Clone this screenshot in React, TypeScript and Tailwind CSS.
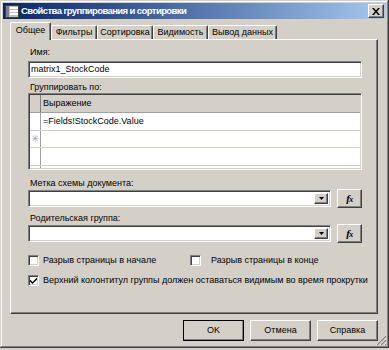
import React from "react";

const raised =
  "border border-t-white border-l-white border-r-[#404040] border-b-[#404040] shadow-[inset_-1px_-1px_0_#808080]";
const sunken =
  "border border-t-[#808080] border-l-[#808080] border-r-white border-b-white shadow-[inset_1px_1px_0_#404040,inset_-1px_-1px_0_#d4d0c8]";

function TitleIcon() {
  return (
    <svg width="14" height="13" viewBox="0 0 14 13" className="shrink-0">
      <rect x="0.5" y="0.5" width="13" height="12" fill="#c0c0c0" stroke="#404040" />
      <rect x="1" y="1" width="3" height="11" fill="#808080" />
      <rect x="5" y="2" width="8" height="2" fill="#ffffff" />
      <rect x="5" y="5" width="8" height="2" fill="#ffffff" />
      <rect x="5" y="8" width="8" height="2" fill="#ffffff" />
    </svg>
  );
}

function CloseBtn() {
  return (
    <div className={`w-[16px] h-[14px] bg-[#d4d0c8] flex items-center justify-center ${raised}`}>
      <svg width="8" height="7" viewBox="0 0 8 7">
        <path d="M0 0h2l2 2.5L6 0h2L5 3.5 8 7H6L4 4.5 2 7H0l3-3.5z" fill="#000" />
      </svg>
    </div>
  );
}

function Combo() {
  return (
    <div className={`flex-1 h-[17px] bg-white flex items-stretch justify-end p-[2px] ${sunken}`}>
      <div className={`w-[14px] bg-[#d4d0c8] flex items-center justify-center ${raised}`}>
        <svg width="5" height="3" viewBox="0 0 5 3">
          <path d="M0 0h5L2.5 3z" fill="#000" />
        </svg>
      </div>
    </div>
  );
}

function FxBtn() {
  return (
    <div className={`w-[25px] h-[19px] ml-[6px] bg-[#d4d0c8] flex items-center justify-center ${raised}`}>
      <span className="font-['Liberation_Serif',serif] italic font-bold text-[11px] leading-none tracking-[-0.5px]">
        f<span className="text-[8px]">x</span>
      </span>
    </div>
  );
}

function Check({ checked }: { checked?: boolean }) {
  return (
    <div className={`w-[11px] h-[11px] bg-white shrink-0 flex items-center justify-center ${sunken}`}>
      {checked && (
        <svg width="7" height="7" viewBox="0 0 7 7">
          <path d="M0 2.5l2.5 2.5L7 0.5v2L2.5 7 0 4.5z" fill="#000" />
        </svg>
      )}
    </div>
  );
}

function Btn({ label, def }: { label: string; def?: boolean }) {
  return (
    <div
      className={`w-[61px] h-[21px] flex items-center justify-center bg-[#d4d0c8] ${
        def ? "outline outline-1 outline-black -outline-offset-1" : ""
      } ${raised}`}
    >
      {label}
    </div>
  );
}

export default function App() {
  return (
    <div className="w-[389px] h-[350px] bg-[#d4d0c8] font-['Liberation_Sans',Arial,sans-serif] text-[9px] text-black overflow-hidden">
      <div className="relative w-[389px] h-[348px] p-[3px] flex flex-col shadow-[inset_-1px_-1px_0_#404040,inset_1px_1px_0_#d4d0c8,inset_-2px_-2px_0_#808080,inset_2px_2px_0_#ffffff]">
        {/* Title bar */}
        <div className="h-[16px] flex items-center bg-linear-to-r from-[#0a246a] to-[#a6caf0] pl-[2px] pr-[2px]">
          <TitleIcon />
          <span className="ml-[2px] text-white font-bold text-[9.5px] tracking-[-0.6px] leading-none whitespace-nowrap">
            Свойства группирования и сортировки
          </span>
          <div className="ml-auto">
            <CloseBtn />
          </div>
        </div>

        {/* Tabs */}
        <div className="mt-[3px] ml-[7px] flex items-end h-[17px]">
          <div className="relative z-10 w-[41px] h-[18px] -mb-px bg-[#d4d0c8] border-t border-l border-t-white border-l-white border-r border-r-[#404040] rounded-t-[2px] flex items-center justify-center pb-[1px] shadow-[inset_-1px_0_0_#808080]">
            Общее
          </div>
          {[
            ["Фильтры", "w-[46px]"],
            ["Сортировка", "w-[56px]"],
            ["Видимость", "w-[55px]"],
            ["Вывод данных", "w-[69px]"],
          ].map(([t, w]) => (
            <div
              key={t}
              className={`${w} h-[14px] bg-[#d4d0c8] border-t border-l border-t-white border-l-white border-r border-r-[#404040] rounded-t-[2px] flex items-center justify-center shadow-[inset_-1px_0_0_#808080] whitespace-nowrap`}
            >
              {t}
            </div>
          ))}
        </div>

        {/* Panel */}
        <div className="ml-[7px] mr-[8px] h-[275px] border border-t-white border-l-white border-r-[#404040] border-b-[#404040] shadow-[inset_-1px_-1px_0_#808080] pl-[17px] pr-[15px] pt-[6px] flex flex-col">
          <div className="leading-[12px] pl-[2px]">Имя:</div>
          <div className={`mt-[3px] h-[17px] bg-white flex items-center pl-[2px] ${sunken}`}>matrix1_StockCode</div>

          <div className="mt-[3px] leading-[12px] pl-[2px]">Группировать по:</div>
          <div className={`h-[77px] bg-white p-[1px] flex flex-col overflow-hidden ${sunken}`}>
            <div className="h-[18px] flex bg-[#d4d0c8] border-b border-b-[#a0a0a0] shrink-0">
              <div className="w-[11px] border-r border-r-[#808080]" />
              <div className="flex-1 flex items-center pl-[2px]">Выражение</div>
            </div>
            <div className="h-[18px] flex border-b border-b-[#d4d0c8] shrink-0">
              <div className="w-[11px] border-r border-r-[#a0a0a0]" />
              <div className="flex-1 flex items-center pl-[2px]">=Fields!StockCode.Value</div>
            </div>
            <div className="h-[17px] flex border-b border-b-[#d4d0c8] shrink-0">
              <div className="w-[11px] border-r border-r-[#a0a0a0] flex items-center justify-center text-[#9aa8c0] text-[10px] leading-none">
                ✳
              </div>
              <div className="flex-1" />
            </div>
            <div className="h-[18px] flex border-b border-b-[#d4d0c8] shrink-0">
              <div className="w-[11px] border-r border-r-[#a0a0a0]" />
              <div className="flex-1" />
            </div>
            <div className="flex-1 flex">
              <div className="w-[11px] border-r border-r-[#a0a0a0]" />
            </div>
          </div>

          <div className="mt-[7px] leading-[12px] pl-[2px]">Метка схемы документа:</div>
          <div className="h-[19px] flex items-center">
            <Combo />
            <FxBtn />
          </div>

          <div className="mt-[4px] leading-[12px] pl-[2px]">Родительская группа:</div>
          <div className="h-[19px] flex items-center">
            <Combo />
            <FxBtn />
          </div>

          <div className="mt-[11px] h-[13px] flex items-center">
            <div className="w-[162px] flex items-center">
              <Check />
              <span className="ml-[4px] whitespace-nowrap">Разрыв страницы в начале</span>
            </div>
            <div className="flex items-center">
              <Check />
              <span className="ml-[10px] whitespace-nowrap">Разрыв страницы в конце</span>
            </div>
          </div>
          <div className="mt-[7px] h-[13px] flex items-center">
            <Check checked />
            <span className="ml-[4px] whitespace-nowrap">
              Верхний колонтитул группы должен оставаться видимым во время прокрутки
            </span>
          </div>
        </div>

        {/* Buttons */}
        <div className="mt-[6px] mr-[8px] flex justify-end gap-[6px]">
          <Btn label="OK" def />
          <Btn label="Отмена" />
          <Btn label="Справка" />
        </div>

        {/* resize grip */}
        <svg
          width="12"
          height="12"
          viewBox="0 0 12 12"
          className="absolute right-[2px] bottom-[2px]"
        >
          <path d="M11 1L1 11M11 5L5 11M11 9L9 11" stroke="#ffffff" strokeWidth="1" />
          <path d="M11 2L2 11M11 6L6 11M11 10L10 11" stroke="#808080" strokeWidth="1.2" />
        </svg>
      </div>
    </div>
  );
}
